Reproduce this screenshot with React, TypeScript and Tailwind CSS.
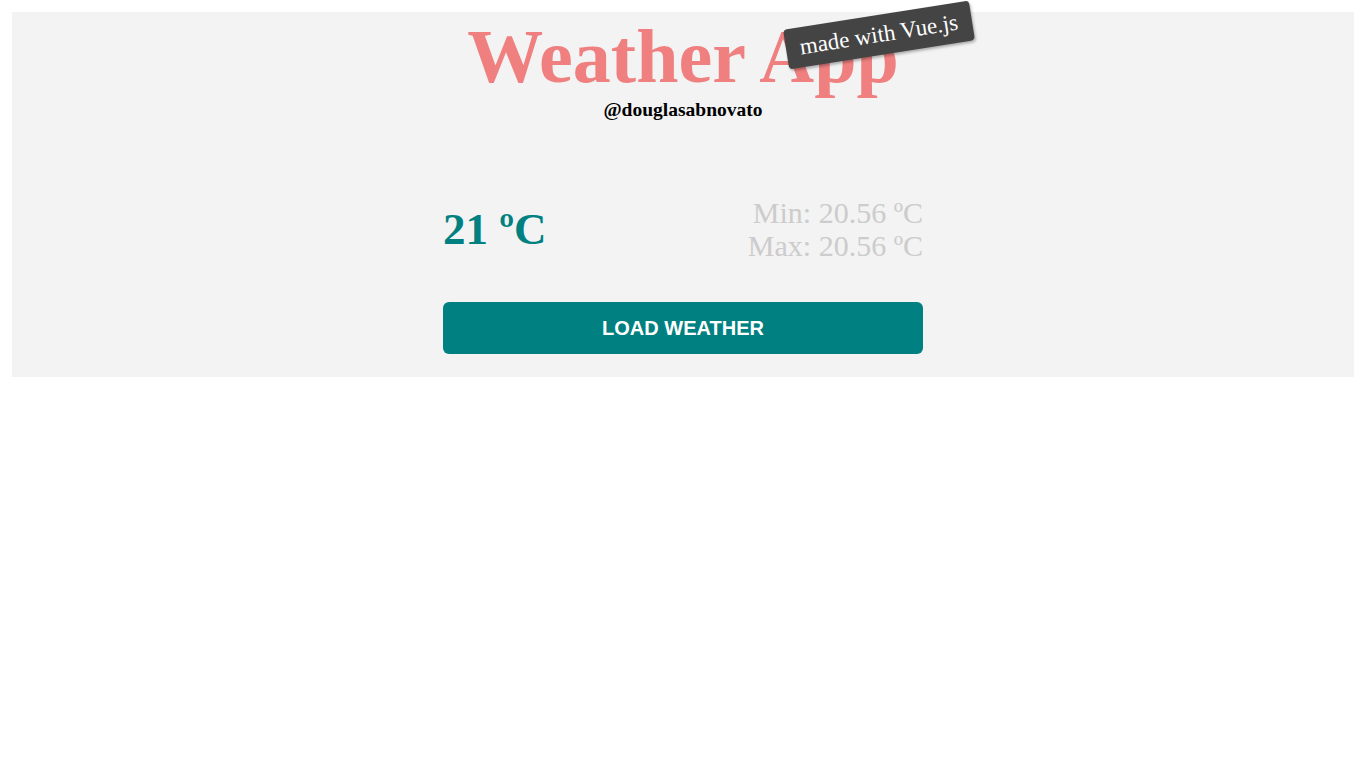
import React from "react";

export default function App() {
  return (
    <div className="min-h-screen bg-white p-3" style={{ fontFamily: '"Liberation Serif", serif' }}>
      <div className="bg-[#f3f3f3] pb-[23px]">
        <div className="relative flex flex-col items-center">
          <h1 className="relative text-[76px] font-bold leading-none text-[#f08080] pt-[6px]" style={{ fontFamily: '"Liberation Serif", serif' }}>
            Weather App
            <span className="absolute right-[-74px] top-[3px] rotate-[-9deg] rounded-[4px] bg-[#444444] px-[14px] py-[6px] text-[23px] font-normal leading-[28px] text-white whitespace-nowrap shadow-[1px_2px_3px_rgba(0,0,0,0.3)]">
              made with Vue.js
            </span>
          </h1>
          <div className="mt-[6px] text-[19.5px] font-bold text-black leading-[20px]">@douglasabnovato</div>
        </div>
        <div className="mx-auto mt-[76px] w-[480px]">
          <div className="flex items-center justify-between">
            <div className="text-[45px] font-bold text-[#008080] leading-none mt-[1px]">21 ºC</div>
            <div className="text-right text-[30px] leading-[33px] text-[#cccccc]">
              <div>Min: 20.56 ºC</div>
              <div>Max: 20.56 ºC</div>
            </div>
          </div>
          <button
            className="mt-[40px] flex h-[52px] w-full items-center justify-center rounded-[6px] bg-[#008080] text-[20px] font-bold text-white"
            style={{ fontFamily: '"Liberation Sans", Arial, sans-serif' }}
          >
            LOAD WEATHER
          </button>
        </div>
      </div>
    </div>
  );
}
